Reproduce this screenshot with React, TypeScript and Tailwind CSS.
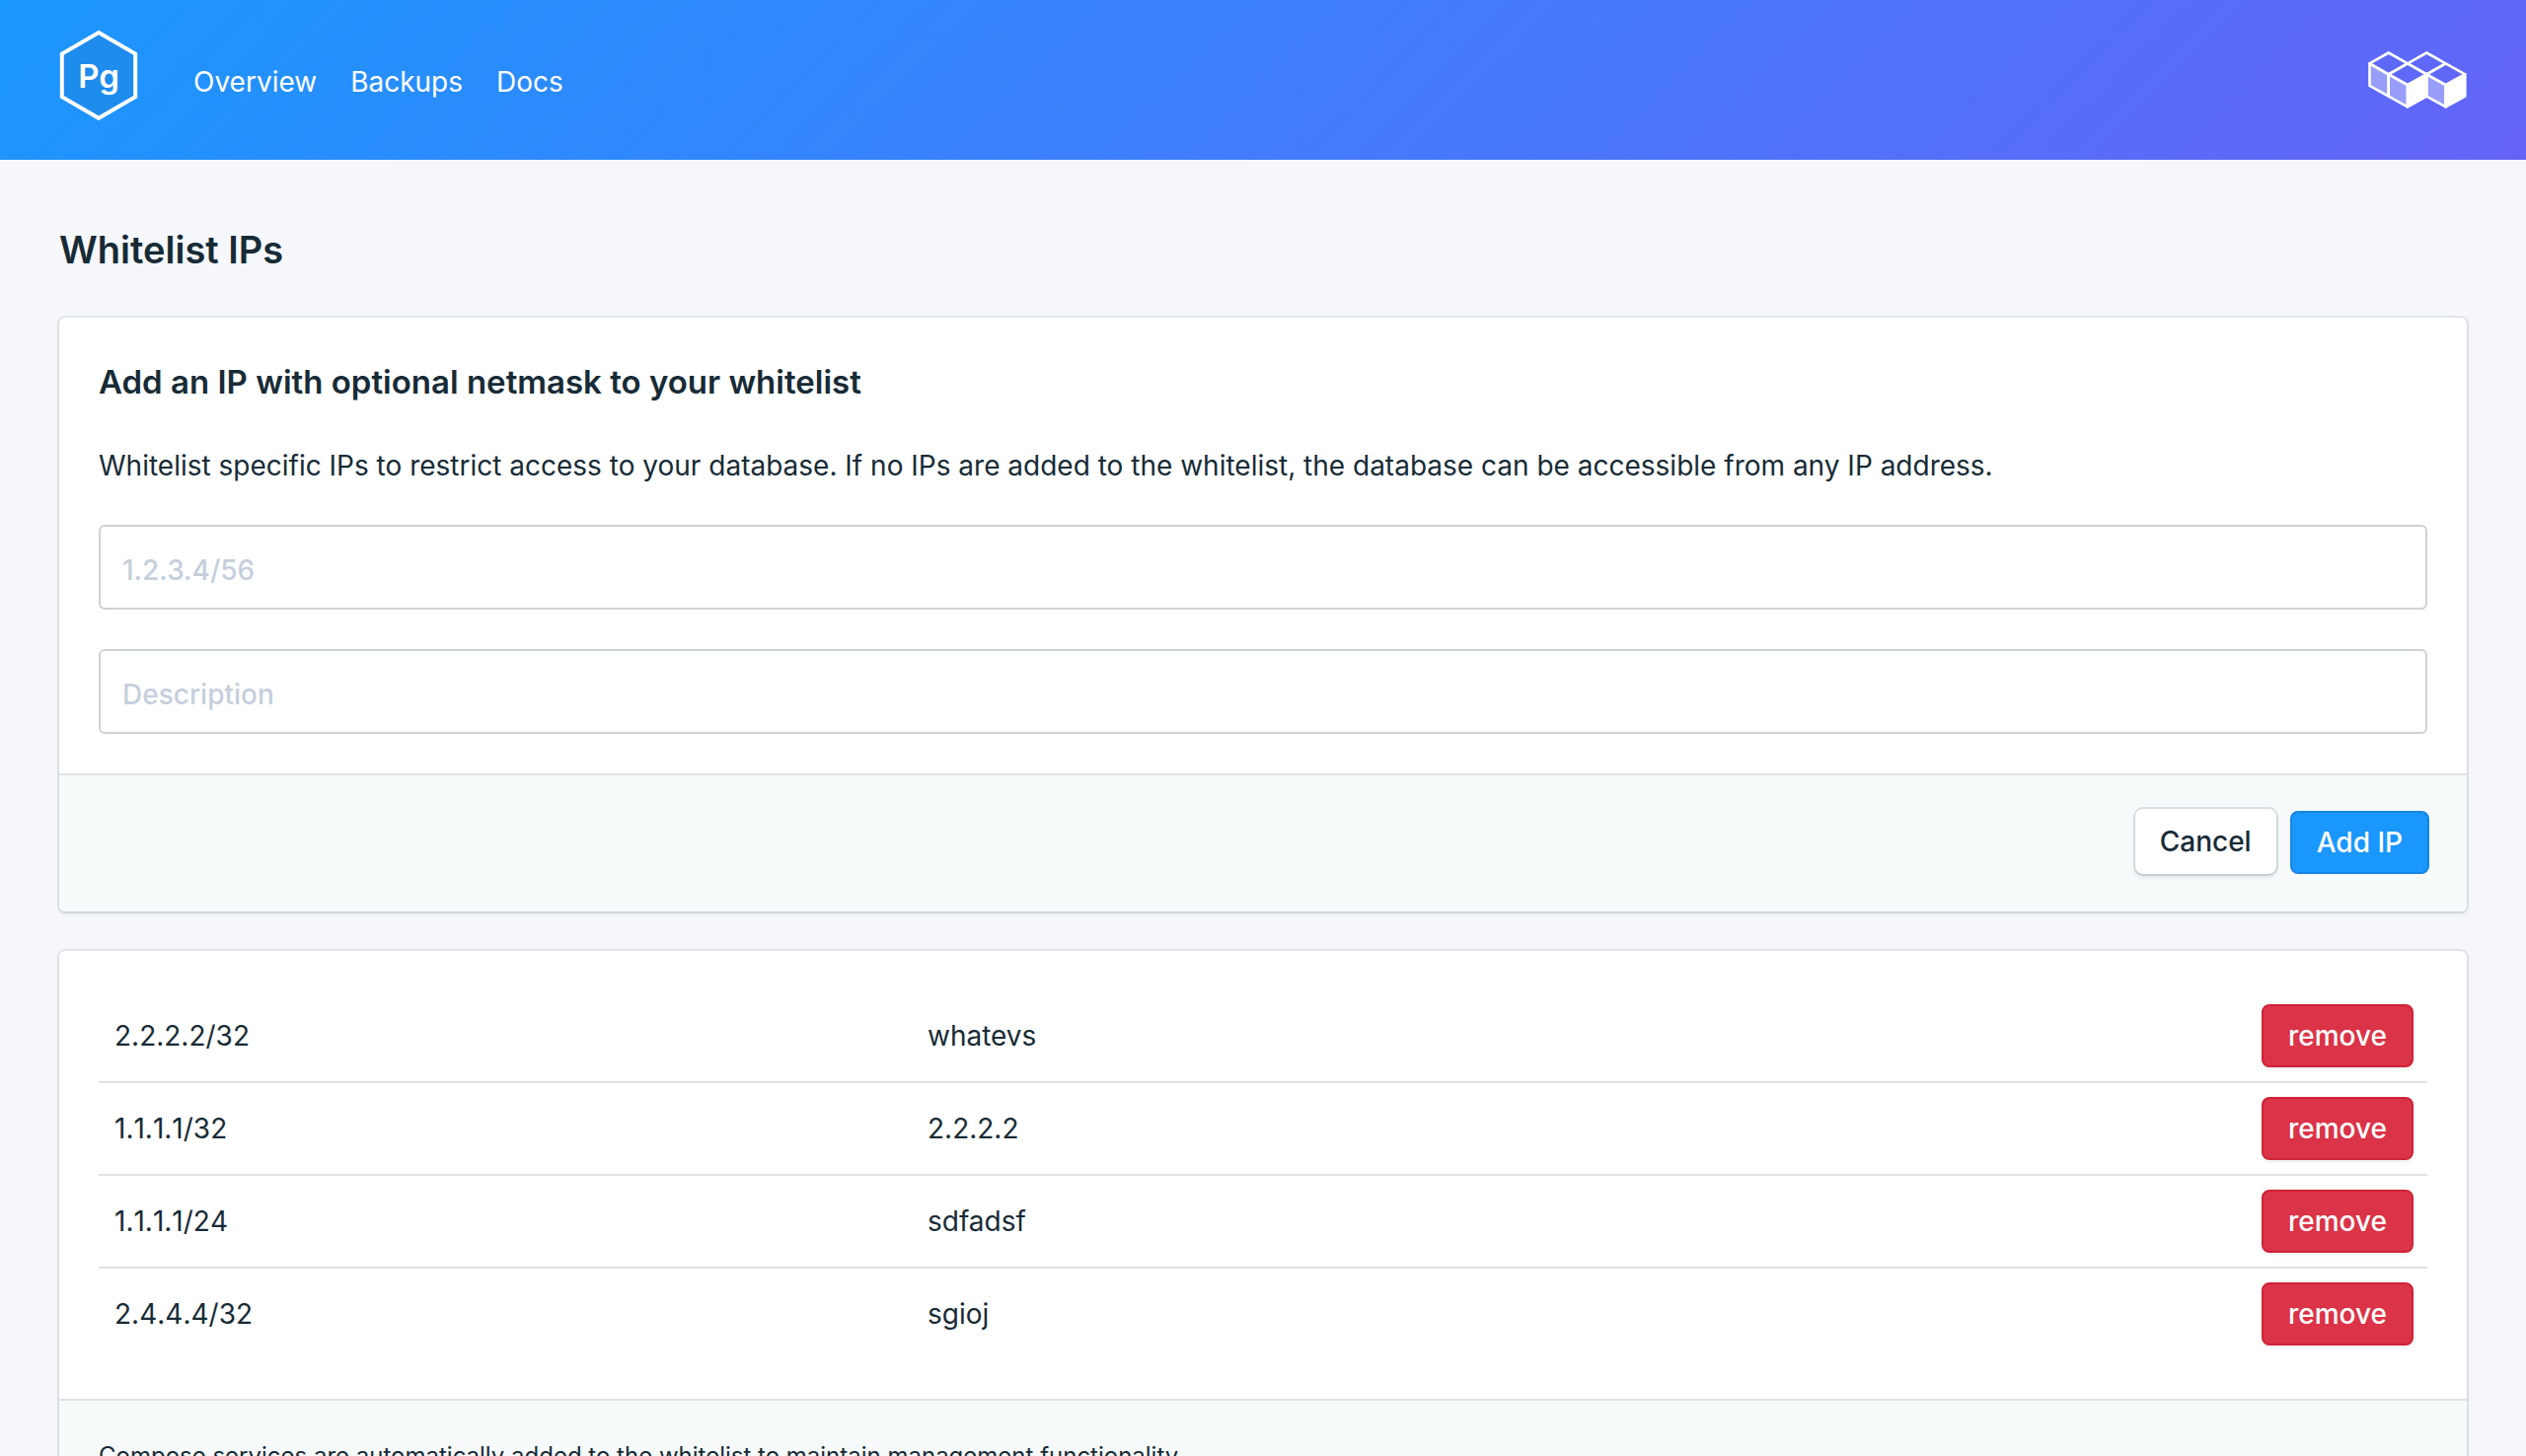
import React from "react";

const NAV = ["Overview", "Backups", "Docs"];

const ENTRIES = [
  { ip: "2.2.2.2/32", description: "whatevs" },
  { ip: "1.1.1.1/32", description: "2.2.2.2" },
  { ip: "1.1.1.1/24", description: "sdfadsf" },
  { ip: "2.4.4.4/32", description: "sgioj" },
];

function PgLogo() {
  return (
    <svg viewBox="0 0 80 92" className="h-[92px] w-20" role="img" aria-label="Pg">
      <path
        d="M40 3 77.2 24.6V68.2L40 89.8 2.8 68.2V24.6Z"
        fill="#1e8ced"
        stroke="#fff"
        strokeWidth="4"
      />
      <text
        x="40"
        y="59"
        textAnchor="middle"
        fill="#fff"
        fontFamily="Inter, sans-serif"
        fontSize="33"
        fontWeight="600"
      >
        Pg
      </text>
    </svg>
  );
}

function BlocksLogo() {
  return (
    <svg viewBox="0 0 100 58" className="h-[58px] w-[100px]" aria-hidden="true">
      <g stroke="#fff" strokeWidth="2.6" strokeLinejoin="round">
        <g fill="none">
          <path d="M1.5 12.4 20.7 1.5 40 12.4 20.7 23.4Z" />
          <path d="M40 12.4 59.3 1.5 78.6 12.4 59.3 23.4Z" />
          <path d="M20.7 23.4 40 12.4 59.3 23.4 40 34.2Z" />
          <path d="M59.3 23.4 78.6 12.4 98.3 23.4 78.6 34.2Z" />
        </g>
        <g fill="#fff" fillOpacity="0.36">
          <path d="M1.5 12.4 20.7 23.4V45.6L1.5 34.8Z" />
          <path d="M20.7 23.4 40 34.2V56.4L20.7 45.6Z" />
          <path d="M59.3 23.4 78.6 34.2V56.4L59.3 45.6Z" />
        </g>
        <g fill="#fff">
          <path d="M40 34.2 59.3 23.4V45.6L40 56.4Z" />
          <path d="M78.6 34.2 98.3 23.4V45.6L78.6 56.4Z" />
        </g>
      </g>
    </svg>
  );
}

function Card({ children }: { children: React.ReactNode }) {
  return (
    <section className="overflow-hidden rounded-md bg-white shadow-[0_0_0_2px_rgba(20,40,60,0.08),0_2px_4px_rgba(20,40,60,0.12)]">
      {children}
    </section>
  );
}

function Field({ id, label }: { id: string; label: string }) {
  return (
    <input
      id={id}
      type="text"
      aria-label={label}
      placeholder={label}
      className="h-[86px] w-full rounded-md border-2 border-[#cdd2d6] bg-white px-[22px] pt-1.5 text-[28px] font-medium placeholder:text-[#c5cfdc]"
    />
  );
}

export default function App() {
  return (
    <div className="h-screen overflow-hidden bg-[#f5f7fb] font-['Inter',sans-serif] text-[28px] text-[#172b36]">
      <header className="flex items-start justify-between bg-[linear-gradient(135deg,#1a97fd,#6464f7)] px-[60px] pb-10">
        <div className="flex items-start gap-14">
          <a href="#home" className="mt-[30px] block">
            <PgLogo />
          </a>
          <nav className="mt-[63px] flex gap-[34px] leading-10 text-white">
            {NAV.map((item) => (
              <a key={item} href={`#${item.toLowerCase()}`}>
                {item}
              </a>
            ))}
          </nav>
        </div>
        <a href="#blocks" aria-label="Blocks" className="mt-[52px] block">
          <BlocksLogo />
        </a>
      </header>

      <main className="flex flex-col gap-10 px-[60px] pt-[66px]">
        <h1 className="pb-1 text-[38px] leading-[50px] font-semibold">Whitelist IPs</h1>

        <Card>
          <form onSubmit={(event) => event.preventDefault()}>
            <div className="flex flex-col gap-10 p-10">
              <h2 className="text-[33px] leading-[50px] font-semibold">
                Add an IP with optional netmask to your whitelist
              </h2>
              <div className="flex flex-col gap-10">
                <p className="leading-10">
                  Whitelist specific IPs to restrict access to your database. If no IPs are added to the
                  whitelist, the database can be accessible from any IP address.
                </p>
                <Field id="ip" label="1.2.3.4/56" />
              </div>
              <Field id="description" label="Description" />
            </div>
            <div className="flex items-end justify-end gap-3.5 border-t-2 border-[#dfe3e7] bg-[#f6fafb] pt-[34px] pr-[38px] pb-[38px] font-medium">
              <button
                type="button"
                className="h-[66px] rounded-lg bg-white px-[25px] shadow-[0_0_0_2px_rgba(20,40,60,0.12),0_3px_4px_rgba(20,40,60,0.12)]"
              >
                Cancel
              </button>
              <button
                type="submit"
                className="h-16 rounded-lg border-2 border-[#1786e2] bg-[#1a97fd] px-[25px] text-white"
              >
                Add IP
              </button>
            </div>
          </form>
        </Card>

        <Card>
          <div className="p-10">
            <table className="w-full table-fixed border-separate border-spacing-0 text-left">
              <tbody>
                {ENTRIES.map((entry, index) => {
                  const border = index < ENTRIES.length - 1 ? "border-b-2 border-[#dde2e7]" : "";
                  return (
                    <tr key={entry.ip}>
                      <td className={`w-[35%] py-3.5 pl-4 [font-kerning:none] ${border}`}>{entry.ip}</td>
                      <td className={`p-3.5 ${border}`}>{entry.description}</td>
                      <td className={`p-3.5 ${border}`}>
                        <button
                          type="button"
                          aria-label={`remove ${entry.ip}`}
                          className="ml-auto block h-16 rounded-lg border-2 border-[#cf2338] bg-[#db3347] px-[25px] font-medium text-white shadow-[0_2px_4px_rgba(20,40,60,0.08)]"
                        >
                          remove
                        </button>
                      </td>
                    </tr>
                  );
                })}
              </tbody>
            </table>
          </div>
          <div className="border-t-2 border-[#dfe3e7] bg-[#f6fafb] p-10 text-2xl leading-8">
            <p>
              Compose services are automatically added to the whitelist to maintain management
              functionality.
            </p>
          </div>
        </Card>
      </main>
    </div>
  );
}
